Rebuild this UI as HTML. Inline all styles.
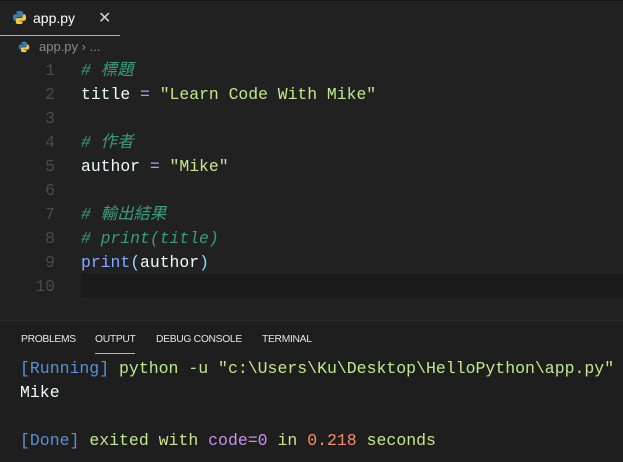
<!DOCTYPE html>
<html><head><style>
body{margin:0;width:623px;height:461px;background:#212121;overflow:hidden;position:relative;font-family:"Liberation Mono","Noto Sans CJK TC",monospace}
.abs{position:absolute}
.tab{left:0;top:0;width:120px;height:36px;}
.tab .u{position:absolute;left:0;bottom:0;width:120px;height:1px;background:#80cbc4}
.ui{font-family:"Liberation Sans","Noto Sans CJK TC",sans-serif}
.ln{position:absolute;width:55px;text-align:right;color:#4a4a4a;font-size:16.4px;line-height:24px;height:24px}
.code{position:absolute;left:81px;font-size:16.4px;line-height:24px;height:24px;color:#eeffff;white-space:pre}
.c{color:#3a9b7f;font-style:italic}
.s{color:#c3e88d}.o{color:#c792ea}.f{color:#82aaff}.p{color:#89ddff}
.cur{left:81px;top:274px;width:542px;height:24px;background:#1b1b1b}
.panel{left:0;top:320px;width:623px;height:141px;background:#1e1e1e;border-top:1px solid #2a2a2a}
.pt{position:absolute;top:13px;font-size:10.3px;color:#e6e6e6;letter-spacing:-0.3px}
.out{position:absolute;left:20px;font-size:16.5px;line-height:24px;color:#eeffff;white-space:pre}
.b{color:#5c8fd6}
</style></head><body>
<div class="abs" style="left:0;top:0;width:623px;height:1px;background:#161616"></div>
<div class="abs tab">
<svg class="abs" style="left:12px;top:10px" width="15" height="15" viewBox="0 0 16 16"><path d="M7.8 1C4.5 1 4.7 2.4 4.7 2.4V4h3.2v.5H3.4S1 4.2 1 7.9s2.1 3.5 2.1 3.5h1.2V9.7s-.1-2.1 2.1-2.1h3.5s2 0 2-2V2.7S12.2 1 7.8 1z" fill="#3e7ab5"/><path d="M8.2 15c3.3 0 3.1-1.4 3.1-1.4V12H8.1v-.5h4.5S15 11.8 15 8.1s-2.1-3.5-2.1-3.5h-1.2v1.7s.1 2.1-2.1 2.1H6.1s-2 0-2 2v3.3S3.8 15 8.2 15z" fill="#f1c93b"/></svg>
<div class="abs ui" style="left:33px;top:10px;font-size:14px;color:#fff">app.py</div>
<div class="abs ui" style="left:98px;top:8px;font-size:16px;color:#ccc">✕</div>
<div class="u"></div>
</div>
<svg class="abs" style="left:18px;top:41px" width="12" height="12" viewBox="0 0 16 16"><path d="M7.8 1C4.5 1 4.7 2.4 4.7 2.4V4h3.2v.5H3.4S1 4.2 1 7.9s2.1 3.5 2.1 3.5h1.2V9.7s-.1-2.1 2.1-2.1h3.5s2 0 2-2V2.7S12.2 1 7.8 1z" fill="#3e7ab5"/><path d="M8.2 15c3.3 0 3.1-1.4 3.1-1.4V12H8.1v-.5h4.5S15 11.8 15 8.1s-2.1-3.5-2.1-3.5h-1.2v1.7s.1 2.1-2.1 2.1H6.1s-2 0-2 2v3.3S3.8 15 8.2 15z" fill="#f1c93b"/></svg>
<div class="abs ui" style="left:39px;top:39px;font-size:13px;color:#8a8a8a">app.py › ...</div>
<div class="abs cur"></div>
<div class="ln" style="top:59px">1</div><div class="code" style="top:59px"><span class="c"># 標題</span></div>
<div class="ln" style="top:83px">2</div><div class="code" style="top:83px">title <span class="o">=</span> <span class="s">"Learn Code With Mike"</span></div>
<div class="ln" style="top:107px">3</div>
<div class="ln" style="top:131px">4</div><div class="code" style="top:131px"><span class="c"># 作者</span></div>
<div class="ln" style="top:155px">5</div><div class="code" style="top:155px">author <span class="o">=</span> <span class="s">"Mike"</span></div>
<div class="ln" style="top:179px">6</div>
<div class="ln" style="top:203px">7</div><div class="code" style="top:203px"><span class="c"># 輸出結果</span></div>
<div class="ln" style="top:227px">8</div><div class="code" style="top:227px"><span class="c"># print(title)</span></div>
<div class="ln" style="top:251px">9</div><div class="code" style="top:251px"><span class="f">print</span><span class="p">(</span>author<span class="p">)</span></div>
<div class="ln" style="top:275px">10</div>
<div class="abs panel">
<div class="pt ui" style="left:21px">PROBLEMS</div>
<div class="pt ui" style="left:95px">OUTPUT</div>
<div class="abs" style="left:95px;top:32px;width:40px;height:1px;background:#80cbc4"></div>
<div class="pt ui" style="left:156px">DEBUG CONSOLE</div>
<div class="pt ui" style="left:262px">TERMINAL</div>
<div class="out" style="top:36px"><span class="b">[Running]</span> <span class="s">python -u "c:\Users\Ku\Desktop\HelloPython\app.py"</span></div>
<div class="out" style="top:60px">Mike</div>
<div class="out" style="top:108px"><span class="b">[Done]</span> <span class="s">exited with</span> <span class="o">code=0</span> <span class="s">in</span> <span style="color:#f78c6c">0.218</span> <span class="s">seconds</span></div>
</div>
</body></html>
